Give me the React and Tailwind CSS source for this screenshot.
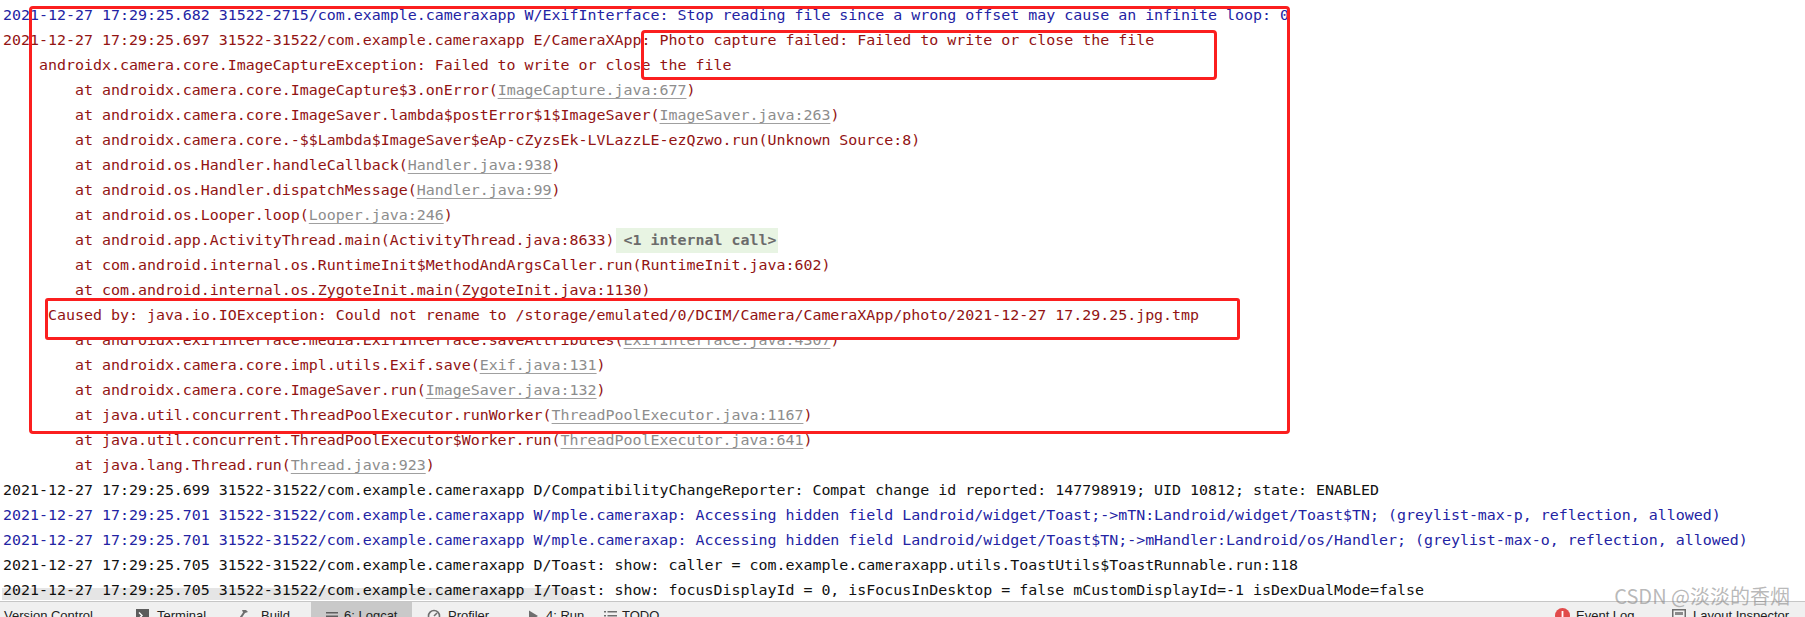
import React from "react";

const E = "text-[#921313]";
const W = "text-[#2323a3]";
const D = "text-[#111111]";

const Link = ({ children }) => (
  <span className="text-[#8d8d8d] underline decoration-[#a0a0a0] underline-offset-[3px]">{children}</span>
);

const at = (prefix, link) => (
  <>
    {prefix}(<Link>{link}</Link>)
  </>
);

const lines = [
  { c: W, t: "2021-12-27 17:29:25.682 31522-2715/com.example.cameraxapp W/ExifInterface: Stop reading file since a wrong offset may cause an infinite loop: 0" },
  { c: E, t: "2021-12-27 17:29:25.697 31522-31522/com.example.cameraxapp E/CameraXApp: Photo capture failed: Failed to write or close the file" },
  { c: E, t: "    androidx.camera.core.ImageCaptureException: Failed to write or close the file" },
  { c: E, t: at("        at androidx.camera.core.ImageCapture$3.onError", "ImageCapture.java:677") },
  { c: E, t: at("        at androidx.camera.core.ImageSaver.lambda$postError$1$ImageSaver", "ImageSaver.java:263") },
  { c: E, t: "        at androidx.camera.core.-$$Lambda$ImageSaver$eAp-cZyzsEk-LVLazzLE-ezQzwo.run(Unknown Source:8)" },
  { c: E, t: at("        at android.os.Handler.handleCallback", "Handler.java:938") },
  { c: E, t: at("        at android.os.Handler.dispatchMessage", "Handler.java:99") },
  { c: E, t: at("        at android.os.Looper.loop", "Looper.java:246") },
  {
    c: E,
    t: (
      <>
        {"        at android.app.ActivityThread.main(ActivityThread.java:8633)"}
        <span className="ml-[1px] inline-block h-[25px] bg-[#e8f4e3] pl-[8px] pr-[2px] font-bold text-[#6b6b6b]">{"<1 internal call>"}</span>
      </>
    ),
  },
  { c: E, t: "        at com.android.internal.os.RuntimeInit$MethodAndArgsCaller.run(RuntimeInit.java:602)" },
  { c: E, t: "        at com.android.internal.os.ZygoteInit.main(ZygoteInit.java:1130)" },
  { c: E, t: "     Caused by: java.io.IOException: Could not rename to /storage/emulated/0/DCIM/Camera/CameraXApp/photo/2021-12-27 17.29.25.jpg.tmp", x: "relative z-[2]" },
  { c: E, t: at("        at androidx.exifinterface.media.ExifInterface.saveAttributes", "ExifInterface.java:4307") },
  { c: E, t: at("        at androidx.camera.core.impl.utils.Exif.save", "Exif.java:131") },
  { c: E, t: at("        at androidx.camera.core.ImageSaver.run", "ImageSaver.java:132") },
  { c: E, t: at("        at java.util.concurrent.ThreadPoolExecutor.runWorker", "ThreadPoolExecutor.java:1167") },
  { c: E, t: at("        at java.util.concurrent.ThreadPoolExecutor$Worker.run", "ThreadPoolExecutor.java:641") },
  { c: E, t: at("        at java.lang.Thread.run", "Thread.java:923") },
  { c: D, t: "2021-12-27 17:29:25.699 31522-31522/com.example.cameraxapp D/CompatibilityChangeReporter: Compat change id reported: 147798919; UID 10812; state: ENABLED" },
  { c: W, t: "2021-12-27 17:29:25.701 31522-31522/com.example.cameraxapp W/mple.cameraxap: Accessing hidden field Landroid/widget/Toast;->mTN:Landroid/widget/Toast$TN; (greylist-max-p, reflection, allowed)" },
  { c: W, t: "2021-12-27 17:29:25.701 31522-31522/com.example.cameraxapp W/mple.cameraxap: Accessing hidden field Landroid/widget/Toast$TN;->mHandler:Landroid/os/Handler; (greylist-max-o, reflection, allowed)" },
  { c: D, t: "2021-12-27 17:29:25.705 31522-31522/com.example.cameraxapp D/Toast: show: caller = com.example.cameraxapp.utils.ToastUtils$ToastRunnable.run:118" },
  { c: D, t: "2021-12-27 17:29:25.705 31522-31522/com.example.cameraxapp I/Toast: show: focusDisplayId = 0, isFocusInDesktop = false mCustomDisplayId=-1 isDexDualMode=false" },
];

const TerminalIcon = () => (
  <svg width="13" height="13" viewBox="0 0 13 13">
    <rect x="0" y="0" width="13" height="13" fill="#5c5c5c" />
    <path d="M3 3.5 L6 6.5 L3 9.5" stroke="#fff" strokeWidth="1.4" fill="none" />
  </svg>
);

const HammerIcon = () => (
  <svg width="16" height="14" viewBox="0 0 16 14">
    <path d="M6 1 L10 1 L12 3 L9 4 L3 13 L1 12 L7 3.5 Z" fill="#6e6e6e" />
  </svg>
);

const LinesIcon = () => (
  <svg width="12" height="12" viewBox="0 0 12 12">
    <rect x="0" y="2" width="12" height="1.5" fill="#5e5e5e" />
    <rect x="0" y="5.5" width="12" height="1.5" fill="#5e5e5e" />
    <rect x="0" y="9" width="12" height="1.5" fill="#5e5e5e" />
  </svg>
);

const ProfilerIcon = () => (
  <svg width="14" height="14" viewBox="0 0 14 14">
    <circle cx="7" cy="7" r="5.5" stroke="#6e6e6e" strokeWidth="1.6" fill="none" />
    <path d="M7 7 L10 4" stroke="#6e6e6e" strokeWidth="1.6" />
  </svg>
);

const RunIcon = () => (
  <svg width="11" height="12" viewBox="0 0 11 12">
    <path d="M1 0.5 L10 6 L1 11.5 Z" fill="#6e6e6e" />
  </svg>
);

const TodoIcon = () => (
  <svg width="13" height="12" viewBox="0 0 13 12">
    <rect x="0" y="1" width="2" height="1.5" fill="#6e6e6e" />
    <rect x="3.5" y="1" width="9.5" height="1.5" fill="#6e6e6e" />
    <rect x="0" y="5" width="2" height="1.5" fill="#6e6e6e" />
    <rect x="3.5" y="5" width="9.5" height="1.5" fill="#6e6e6e" />
    <rect x="0" y="9" width="2" height="1.5" fill="#6e6e6e" />
    <rect x="3.5" y="9" width="9.5" height="1.5" fill="#6e6e6e" />
  </svg>
);

const EventIcon = () => (
  <svg width="15" height="15" viewBox="0 0 15 15">
    <circle cx="7.5" cy="7.5" r="7.5" fill="#e14b4b" />
    <rect x="6.6" y="3" width="1.8" height="6" fill="#fff" />
  </svg>
);

const LayoutIcon = () => (
  <svg width="14" height="14" viewBox="0 0 14 14">
    <rect x="0.75" y="0.75" width="12.5" height="12.5" stroke="#6e6e6e" strokeWidth="1.5" fill="none" />
    <rect x="3" y="3" width="8" height="3" fill="#8a8a8a" />
  </svg>
);

export default function App() {
  return (
    <div className="relative flex h-[617px] w-full flex-col overflow-hidden bg-white">
      <div className="h-[601px] shrink-0 overflow-hidden pl-[3px] pt-[3px] font-['DejaVu_Sans_Mono',monospace] text-[14.95px]">
        {lines.map((l, i) => (
          <div key={i} className={`h-[25px] whitespace-pre leading-[25px] ${l.c} ${l.x || ""}`}>
            {l.t}
          </div>
        ))}
      </div>

      <div className="flex h-[28px] shrink-0 items-stretch border-t border-[#c6c6c6] bg-[#f0f0f0] font-['Liberation_Sans',Arial,sans-serif] text-[13px] leading-[28px] text-[#222]">
        <div className="flex w-[130px] shrink-0 items-center whitespace-nowrap pl-[4px]">Version Control</div>
        <div className="flex w-[100px] shrink-0 items-center gap-[8px] whitespace-nowrap pl-[6px]">
          <TerminalIcon />
          <span>Terminal</span>
        </div>
        <div className="flex w-[81px] shrink-0 items-center gap-[9px] whitespace-nowrap pl-[6px]">
          <HammerIcon />
          <span>Build</span>
        </div>
        <div className="flex w-[101px] shrink-0 items-center gap-[6px] whitespace-nowrap bg-[#c9c9c9] pl-[15px]">
          <LinesIcon />
          <span>6: Logcat</span>
        </div>
        <div className="flex w-[112px] shrink-0 items-center gap-[7px] whitespace-nowrap pl-[15px]">
          <ProfilerIcon />
          <span>Profiler</span>
        </div>
        <div className="flex w-[74px] shrink-0 items-center gap-[7px] whitespace-nowrap pl-[4px]">
          <RunIcon />
          <span>4: Run</span>
        </div>
        <div className="flex w-[951px] shrink-0 items-center gap-[5px] whitespace-nowrap pl-[6px]">
          <TodoIcon />
          <span>TODO</span>
        </div>
        <div className="flex w-[117px] shrink-0 items-center gap-[6px] whitespace-nowrap pl-[6px]">
          <EventIcon />
          <span>Event Log</span>
        </div>
        <div className="flex shrink-0 items-center gap-[7px] whitespace-nowrap pl-[6px]">
          <LayoutIcon />
          <span>Layout Inspector</span>
        </div>
      </div>

      {/* horizontal scrollbar thumb */}
      <div className="absolute left-[2px] top-[588px] h-[12px] w-[572px] bg-black/[0.1]" />

      {/* annotation boxes */}
      <div className="pointer-events-none absolute left-[29px] top-[6px] z-[3] h-[428px] w-[1261px] rounded-[4px] border-[3px] border-[#fb1f1f]" />
      <div className="pointer-events-none absolute left-[641px] top-[30px] z-[3] h-[50px] w-[576px] rounded-[4px] border-[3px] border-[#fb1f1f]" />
      <div className="pointer-events-none absolute left-[45px] top-[298px] z-[1] h-[42px] w-[1195px] rounded-[3px] border-[3px] border-[#fb1f1f] bg-white" />

      {/* watermark */}
      <div className="pointer-events-none absolute right-[15px] top-[586px] z-[4] whitespace-nowrap font-['Noto_Sans_CJK_SC',sans-serif] text-[20px] leading-[20px] text-[#8a8a8a]/60">
        CSDN @淡淡的香烟
      </div>
    </div>
  );
}
